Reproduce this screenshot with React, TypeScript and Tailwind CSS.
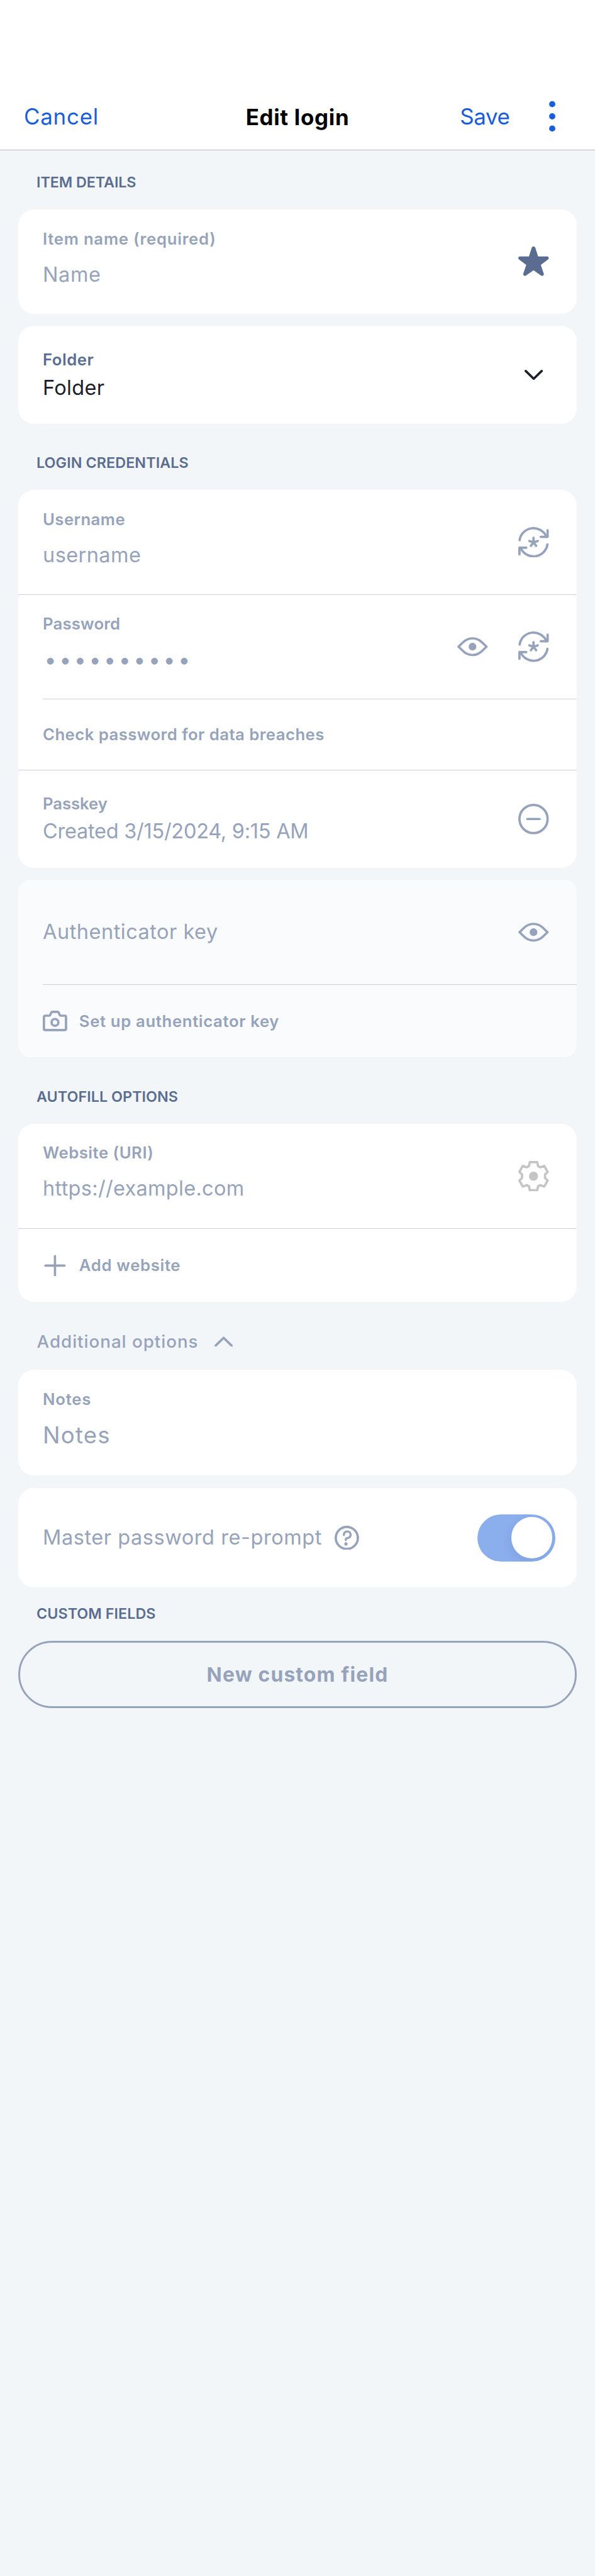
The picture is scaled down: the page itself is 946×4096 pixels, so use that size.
import type { ReactNode } from "react";

const stroke = {
  fill: "none",
  stroke: "currentColor",
  strokeWidth: 4.6,
  strokeLinecap: "round",
  strokeLinejoin: "round",
} as const;

function StarIcon() {
  return (
    <svg viewBox="0 0 60 60" className="size-[48.5px]" fill="currentColor">
      <path d="M26.4 2.4C27.5-.6 32.5-.6 33.6 2.4L39 19.5H56.8C60.3 19.5 61 24 58.3 25.6L44.3 36.2L50 53C51 56.8 47.5 59 44.6 57L30 46.8L15.4 57C12.5 59 9 56.8 10 53L15.7 36.2L1.7 25.6C-1 24-.3 19.5 3.2 19.5H21Z" />
    </svg>
  );
}

function ChevronIcon({ up = false }: { up?: boolean }) {
  return (
    <svg viewBox="0 0 36 20.4" className="h-[16.5px] w-[29.1px]" {...stroke}>
      <path d={up ? "M2.3 18L18 2.8L33.7 18" : "M2.3 2.4L18 17.6L33.7 2.4"} />
    </svg>
  );
}

function GenerateIcon() {
  return (
    <svg viewBox="0 0 60 60" className="size-[48.5px]" {...stroke}>
      <path d="M2.6 25.8A27.7 27.7 0 0 1 55.5 19.2" />
      <path d="M57.7 6.2V19.3H44.3" />
      <path d="M57.4 34.2A27.7 27.7 0 0 1 4.5 40.8" />
      <path d="M2.3 53.8V40.7H15.7" />
      <path d="M30 30V21.2M30 30L21.8 27.4M30 30L38.2 27.4M30 30L24.9 37M30 30L35.1 37" />
    </svg>
  );
}

function EyeIcon() {
  return (
    <svg viewBox="0 0 60 60" className="size-[48.5px]" {...stroke}>
      <path d="M2.5 30L9.5 23.2C15 17.4 21.5 13.6 30 13.6S45 17.4 50.5 23.2L57.5 30L50.5 36.8C45 42.6 38.5 46.4 30 46.4S15 42.6 9.5 36.8Z" />
      <circle cx="30" cy="30" r="7.6" fill="currentColor" stroke="none" />
    </svg>
  );
}

function MinusCircleIcon() {
  return (
    <svg viewBox="0 0 60 60" className="size-[48.5px]" {...stroke}>
      <circle cx="30" cy="30" r="27.7" />
      <path d="M18 30H42" />
    </svg>
  );
}

function GearIcon() {
  return (
    <svg viewBox="0 0 60 60" className="size-[48.5px]" {...stroke}>
      <path d="M22.7 2.4H37.3L38.9 10.2L43.4 12.4L51.2 9.7L57.8 21.6L52.6 26.6V33.4L57.8 38.4L51.2 50.3L43.4 47.6L38.9 49.8L37.3 57.6H22.7L21.1 49.8L16.6 47.6L8.8 50.3L2.2 38.4L7.4 33.4V26.6L2.2 21.6L8.8 9.7L16.6 12.4L21.1 10.2Z" />
      <circle cx="30" cy="30" r="9" fill="currentColor" stroke="none" />
    </svg>
  );
}

function CameraIcon() {
  return (
    <svg viewBox="0 0 48 48" className="size-[38.8px]" {...stroke}>
      <path d="M5 13.6H12.2Q14.2 13.6 14.9 11.8L16.6 7.6Q17.4 6 19.2 6H28.8Q30.6 6 31.4 7.6L33.1 11.8Q33.8 13.6 35.8 13.6H43Q45.7 13.6 45.7 16.3V39.4Q45.7 42 43 42H5Q2.3 42 2.3 39.4V16.3Q2.3 13.6 5 13.6Z" />
      <circle cx="24" cy="26.8" r="6.7" />
    </svg>
  );
}

function PlusIcon() {
  return (
    <svg viewBox="0 0 48 48" className="size-[38.8px]" {...stroke}>
      <path d="M24 5.3V42.7M5.3 24H42.7" />
    </svg>
  );
}

function HelpIcon() {
  return (
    <svg viewBox="0 0 48 48" className="size-[38.8px]" {...stroke}>
      <circle cx="24" cy="24" r="21.7" />
      <path d="M18.2 18.3C18.2 14 20.8 11.3 24.7 11.3C28.6 11.3 31.5 13.8 31.5 17.6C31.5 21.4 28.9 23.8 25.2 24.3C23 24.6 22 25.6 22 27.6V28.2" strokeWidth="4.2" />
      <circle cx="22.3" cy="35.8" r="3.2" fill="currentColor" stroke="none" />
    </svg>
  );
}

function Heading({ className, children }: { className: string; children: ReactNode }) {
  return (
    <h2 className={`pl-[29px] text-[23.3px] leading-[32px] font-semibold text-[#5a6d91] ${className}`}>
      {children}
    </h2>
  );
}

function Card({ className, children }: { className: string; children: ReactNode }) {
  return <section className={`overflow-hidden ${className}`}>{children}</section>;
}

function Label({ className, children }: { className: string; children: ReactNode }) {
  return <div className={`text-[25.7px] leading-[32px] font-semibold ${className}`}>{children}</div>;
}

function Value({ className, children }: { className: string; children: ReactNode }) {
  return <div className={`text-[32.5px] leading-[40px] ${className}`}>{children}</div>;
}

function Row({ className, children, icons }: { className: string; children: ReactNode; icons?: ReactNode }) {
  return (
    <div className={`flex justify-between pr-[44.5px] pl-[39px] ${className}`}>
      <div>{children}</div>
      <div className="flex items-center gap-[48.5px]">{icons}</div>
    </div>
  );
}

export default function App() {
  return (
    <div className="min-h-[4096px] w-[946px] bg-[#f3f6f9] font-['Inter','Liberation_Sans',sans-serif] text-[#96a3bb]">
      <header className="h-[239px] border-b border-[#b9babb] bg-white pt-[164.5px]">
        <div className="grid h-[40px] grid-cols-[1fr_auto_1fr] grid-rows-[40px] items-center px-[38px] text-[34.9px] leading-[40px] text-[#175ddc]">
          <div className="tracking-[0.77px]">Cancel</div>
          <h1 className="mt-[3px] font-bold tracking-[0.69px] text-black">Edit login</h1>
          <div className="flex h-[40px] items-center justify-end gap-[62px] pr-[25.5px]">
            <span className="tracking-[-0.36px]">Save</span>
            <svg viewBox="0 0 10 50" className="h-[50px] w-[10px]" fill="currentColor">
              <circle cx="5" cy="5.6" r="4.9" />
              <circle cx="5" cy="25" r="4.9" />
              <circle cx="5" cy="44.4" r="4.9" />
            </svg>
          </div>
        </div>
      </header>

      <main className="flex flex-col px-[29px]">
        <Heading className="mt-[35px] tracking-[-0.07px]">ITEM DETAILS</Heading>
        <Card className="mt-[27px] rounded-[25px] bg-white">
          <Row className="h-[166px]" icons={<span className="text-[#5a6d91]"><StarIcon /></span>}>
            <Label className="mt-[30.5px] tracking-[0.76px]">Item name (required)</Label>
            <Value className="mt-[21px] tracking-[0.6px]">Name</Value>
          </Row>
        </Card>

        <Card className="mt-[19px] rounded-[25px] bg-white">
          <Row
            className="h-[156px]"
            icons={<span className="mr-[9.7px] text-[#1b2029]"><ChevronIcon /></span>}
          >
            <Label className="mt-[37.5px] tracking-[0.52px] text-[#5a6d91]">Folder</Label>
            <Value className="mt-[9px] tracking-[0.32px] text-[#1b2029]">Folder</Value>
          </Row>
        </Card>

        <Heading className="mt-[46px] tracking-[0.1px]">LOGIN CREDENTIALS</Heading>
        <Card className="mt-[27px] rounded-[25px] bg-white">
          <Row className="h-[167px] border-b border-[#d1d1d3]" icons={<GenerateIcon />}>
            <Label className="mt-[30.5px] tracking-[0.45px]">Username</Label>
            <Value className="mt-[21px] tracking-[0.42px]">username</Value>
          </Row>
          <Row className="h-[165px]" icons={<><EyeIcon /><GenerateIcon /></>}>
            <Label className="mt-[30px] tracking-[0.18px]">Password</Label>
            <div className="mt-[21px] ml-[2.5px] text-[34px] leading-[40px] tracking-[4.5px]">••••••••••</div>
          </Row>
          <div className="ml-[39px] h-px bg-[#d1d1d3]" />
          <Row className="h-[113px] border-b border-[#d1d1d3]">
            <Label className="mt-[40px] tracking-[0.47px]">Check password for data breaches</Label>
          </Row>
          <Row className="h-[155px]" icons={<MinusCircleIcon />}>
            <Label className="mt-[36.5px] tracking-[-0.05px]">Passkey</Label>
            <Value className="mt-[8.5px] tracking-[-0.26px]">Created 3/15/2024, 9:15 AM</Value>
          </Row>
        </Card>

        <Card className="mt-[19px] rounded-[20px] bg-[#fafbfd]">
          <Row className="h-[166px]" icons={<EyeIcon />}>
            <Value className="mt-[63px] tracking-[0.5px]">Authenticator key</Value>
          </Row>
          <div className="ml-[39px] h-px bg-[#cdcfd1]" />
          <div className="flex h-[115px] items-center gap-[19px] pl-[39px]">
            <CameraIcon />
            <Label className="tracking-[0.65px]">Set up authenticator key</Label>
          </div>
        </Card>

        <Heading className="mt-[47px] tracking-[0.06px]">AUTOFILL OPTIONS</Heading>
        <Card className="mt-[27px] rounded-[25px] bg-white">
          <Row
            className="h-[167px] border-b border-[#d1d1d3]"
            icons={<span className="text-[#c5c5c7]"><GearIcon /></span>}
          >
            <Label className="mt-[30px] tracking-[0.52px]">Website (URI)</Label>
            <Value className="mt-[21px] tracking-[0.3px]">https://example.com</Value>
          </Row>
          <div className="flex h-[116px] items-center gap-[19px] pl-[39px]">
            <PlusIcon />
            <Label className="tracking-[0.67px]">Add website</Label>
          </div>
        </Card>

        <div className="mt-[47px] flex items-center gap-[25px] pl-[29.5px]">
          <span className="text-[27.7px] leading-[32px] font-medium tracking-[1px]">Additional options</span>
          <ChevronIcon up />
        </div>
        <Card className="mt-[29px] rounded-[25px] bg-white">
          <Row className="h-[168px]">
            <Label className="mt-[30.5px] tracking-[0.77px]">Notes</Label>
            <div className="mt-[19.5px] text-[36.5px] leading-[44px] tracking-[1.26px]">Notes</div>
          </Row>
        </Card>

        <Card className="mt-[20px] rounded-[25px] bg-white">
          <div className="flex h-[158px] items-center pr-[34.3px] pl-[39px]">
            <Value className="tracking-[0.55px]">Master password re-prompt</Value>
            <span className="ml-[20px]"><HelpIcon /></span>
            <div className="ml-auto flex h-[75px] w-[124px] items-center justify-end overflow-hidden rounded-full bg-[#8baeed] pr-[4.5px]">
              <span className="size-[65.5px] rounded-full bg-white shadow-[-2px_6px_14px_rgba(60,70,110,0.1)]" />
            </div>
          </div>
        </Card>

        <Heading className="mt-[26px] tracking-[0.06px]">CUSTOM FIELDS</Heading>
        <button className="mt-[27px] h-[107px] rounded-full border-[3.6px] border-[#96a3bb] text-[31.8px] leading-[40px] font-bold tracking-[1.17px]">
          New custom field
        </button>
      </main>
    </div>
  );
}
